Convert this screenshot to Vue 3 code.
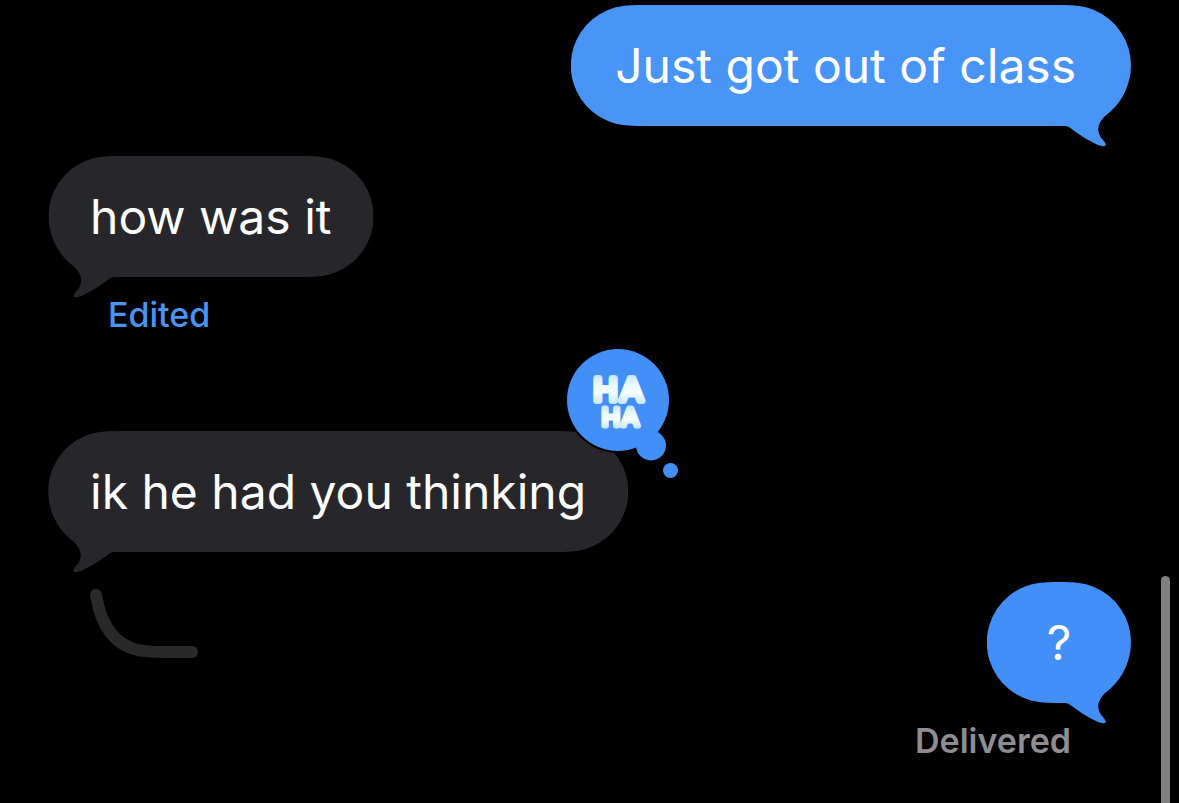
<script setup>
const messages = [
  { id: 1, side: 'outgoing', tone: 'light', text: 'Just got out of class' },
  { id: 2, side: 'incoming', tone: 'grey', text: 'how was it', edited: true },
  { id: 3, side: 'incoming', tone: 'grey', text: 'ik he had you thinking', reaction: true },
  { id: 4, side: 'outgoing', tone: 'deep', text: '?', status: 'Delivered' },
]
</script>

<template>
  <main class="chat">
    <ol class="messages">
      <li v-for="m in messages" :key="m.id" class="message" :class="[m.side, { edited: m.edited }]">
        <svg v-if="m.status" class="thread" width="108" height="70" viewBox="0 0 108 70" aria-hidden="true">
          <path d="M6 6C11 37 25 56 48 61C58 63.500 78 63 102 63" />
        </svg>
        <div class="bubble" :class="m.tone">
          <div class="shape" aria-hidden="true">
            <svg class="cap" width="72" height="142" viewBox="0 0 72 142">
              <path d="M72 0C56 0 46 1 37 5A60 60 0 0 0 37 116C46 120 56 121 72 121Z" />
            </svg>
            <span class="middle"></span>
            <svg class="cap" width="72" height="142" viewBox="0 0 72 142">
              <path d="M0 0C16 0 26 1 35 5A60 60 0 0 1 72 60A63 63 0 0 1 51 107C40 115 37 123 41 131C43 135 48 138 46.500 140.500C45 142 41 141 37 139C28 135 18 128 12 123.500C9 121.300 8 121 4 121H0Z" />
            </svg>
          </div>
          <p class="text">{{ m.text }}</p>
          <svg v-if="m.reaction" class="reaction" width="112" height="131" viewBox="0 0 112 131" role="img" aria-label="Haha reaction">
            <defs>
              <linearGradient id="gloss" x1="0" y1="0" x2="0" y2="1">
                <stop offset="0" stop-color="#b5dcfb" />
                <stop offset="0.35" stop-color="#e9f9ff" />
                <stop offset="0.6" stop-color="#f4fdff" />
                <stop offset="1" stop-color="#b5dcfb" />
              </linearGradient>
            </defs>
            <circle cx="51" cy="52" r="53" fill="#000" />
            <circle cx="51" cy="52" r="51" />
            <circle cx="84" cy="97.500" r="15" />
            <circle cx="103.500" cy="122.500" r="7.500" />
            <g class="haha">
              <text x="51" y="53" dx="0 3" font-size="33" stroke-width="6">HA</text>
              <text x="53" y="78" dx="0 2" font-size="25" stroke-width="5">HA</text>
            </g>
          </svg>
        </div>
        <button v-if="m.edited" type="button" class="note edit">Edited</button>
        <p v-if="m.status" class="note status">{{ m.status }}</p>
      </li>
    </ol>
    <div class="scrollbar" aria-hidden="true"></div>
  </main>
</template>

<style>
body {
  margin: 0;
  background: #000;
}
</style>

<style scoped>
.chat {
  box-sizing: border-box;
  min-height: 100vh;
  padding: 5px 48px 0;
  background: #000;
  color: #fff;
  font-family: Inter, "Liberation Sans", sans-serif;
}
.messages {
  display: flex;
  flex-direction: column;
  gap: 30px;
  margin: 0;
  padding: 0;
  list-style: none;
}
.message {
  display: grid;
  justify-items: start;
}
.message.outgoing {
  grid-template-columns: auto 1fr;
  justify-items: end;
}
.outgoing .bubble,
.outgoing .status {
  grid-column: 2;
}
.message.edited {
  margin-bottom: 66px;
}
.bubble {
  position: relative;
  box-sizing: border-box;
  min-width: 144px;
  height: 121px;
  padding: 0 42px;
  color: #27272b;
}
.bubble.light {
  padding: 0 55px 0 44px;
  color: #4994f7;
}
.bubble.deep {
  color: #428ff7;
}
.shape {
  position: absolute;
  inset: 0;
  display: flex;
}
.incoming .shape {
  transform: scaleX(-1);
}
.cap {
  flex: none;
  fill: currentColor;
}
.middle {
  flex: 1;
  height: 121px;
  margin: 0 -1px;
  background: currentColor;
}
.text {
  position: relative;
  margin: 0;
  color: #fff;
  font-size: 48px;
  line-height: 121px;
  text-align: center;
  white-space: nowrap;
}
.reaction {
  position: absolute;
  top: -83px;
  right: -51px;
  fill: #428ff7;
}
.haha {
  fill: url(#gloss);
  stroke: url(#gloss);
  stroke-linejoin: round;
  font-family: "Liberation Sans", sans-serif;
  text-anchor: middle;
}
.note {
  height: 40px;
  margin: 0;
  padding: 0;
  border: 0;
  background: none;
  font-family: inherit;
  font-size: 34px;
  line-height: 40px;
}
.edit {
  margin: 18px 0 0 60px;
  color: #4994f7;
  font-weight: 500;
  cursor: pointer;
}
.status {
  margin: 18px 60px 0 0;
  color: #8d8d92;
  font-weight: 600;
}
.thread {
  margin: 7px 0 0 42px;
  fill: none;
  stroke: #29292a;
  stroke-width: 12;
  stroke-linecap: round;
}
.scrollbar {
  position: fixed;
  right: 9px;
  bottom: 0;
  width: 9px;
  height: 227px;
  border-radius: 5px 5px 0 0;
  background: #808080;
}
</style>
